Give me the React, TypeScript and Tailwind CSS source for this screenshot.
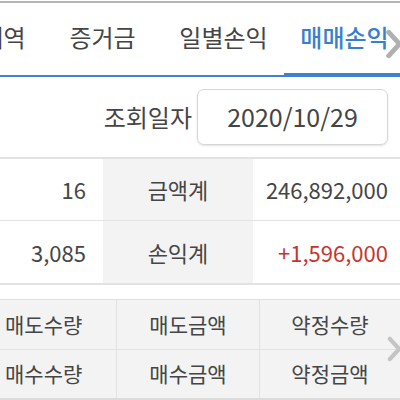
const tabs = ['거래내역', '증거금', '일별손익', '매매손익'];

const summary = [
  { count: '16', label: '금액계', value: '246,892,000', red: false },
  { count: '3,085', label: '손익계', value: '+1,596,000', red: true },
];

const menu = [
  ['매도수량', '매도금액', '약정수량'],
  ['매수수량', '매수금액', '약정금액'],
];

function Chevron({ className }: { className: string }) {
  return (
    <svg className={className} viewBox="0 0 16 28" fill="none">
      <path d="M3 3 L13 14 L3 25" stroke="currentColor" strokeWidth="4.5" strokeLinecap="round" strokeLinejoin="round" />
    </svg>
  );
}

export default function App() {
  return (
    <div
      className="w-[400px] h-[400px] overflow-hidden bg-white text-[#454545]"
      style={{ fontFamily: '"Noto Sans CJK KR", "Noto Sans", sans-serif' }}
    >
      {/* tab bar */}
      <div className="relative h-[76px] border-t-[2px] border-[#b5b5b5] mt-[1px] overflow-hidden">
        <div className="flex h-full -ml-[79px] border-b-[2px] border-[#3f80d0]">
          {tabs.map((t, i) => (
            <div
              key={t}
              className={`relative w-[121px] shrink-0 flex items-center justify-center text-[24px] pb-[4px] ${
                i === 3 ? 'text-[#3a7fcf] font-medium' : ''
              }`}
            >
              {t}
              {i === 3 && <div className="absolute left-0 right-0 -bottom-[2px] h-[4px] bg-[#3f80d0]" />}
            </div>
          ))}
        </div>
        <Chevron className="absolute right-[-3px] top-[26px] w-[18px] h-[30px] text-[#b0b0b0]" />
      </div>

      {/* date row */}
      <div className="h-[80px] flex items-center justify-end pr-[12px] gap-[5px]">
        <span className="text-[24px]">조회일자</span>
        <div className="w-[191px] h-[56px] border border-[#d6d6d6] rounded-[7px] shadow-[0_1px_2px_rgba(0,0,0,0.12)] flex items-center justify-center text-[25px]">
          2020/10/29
        </div>
      </div>

      {/* summary table */}
      <div className="border-t-[2px] border-b-[2px] border-[#e2e2e2]">
        {summary.map((r, i) => (
          <div
            key={r.label}
            className={`grid grid-cols-[103px_150px_1fr] h-[62px] text-[22px] ${i === 0 ? 'border-b border-[#e4e4e4]' : ''}`}
          >
            <div className="flex items-center justify-end pr-[17px]">{r.count}</div>
            <div className="flex items-center justify-center bg-[#f3f3f3]">{r.label}</div>
            <div className={`flex items-center justify-end pr-[12px] ${r.red ? 'text-[#c9332e]' : ''}`}>{r.value}</div>
          </div>
        ))}
      </div>

      {/* menu grid */}
      <div className="relative mt-[14px] border-t border-[#dedede]">
        {menu.map((row, i) => (
          <div
            key={i}
            className={`grid grid-cols-[117px_143px_1fr] h-[50px] bg-[#f3f3f3] text-[21px] ${i === 0 ? 'border-b border-[#e2e2e2]' : 'border-b-[2px] border-[#dcdcdc]'}`}
          >
            {row.map((c, j) => (
              <div
                key={c}
                className={`flex items-center ${j === 0 ? 'justify-start pl-[5px]' : 'justify-center'} ${j < 2 ? 'border-r border-[#e2e2e2]' : ''}`}
              >
                {c}
              </div>
            ))}
          </div>
        ))}
        <Chevron className="absolute right-[-2px] top-[36px] w-[15px] h-[26px] text-[#c4c4c4]" />
      </div>
    </div>
  );
}
